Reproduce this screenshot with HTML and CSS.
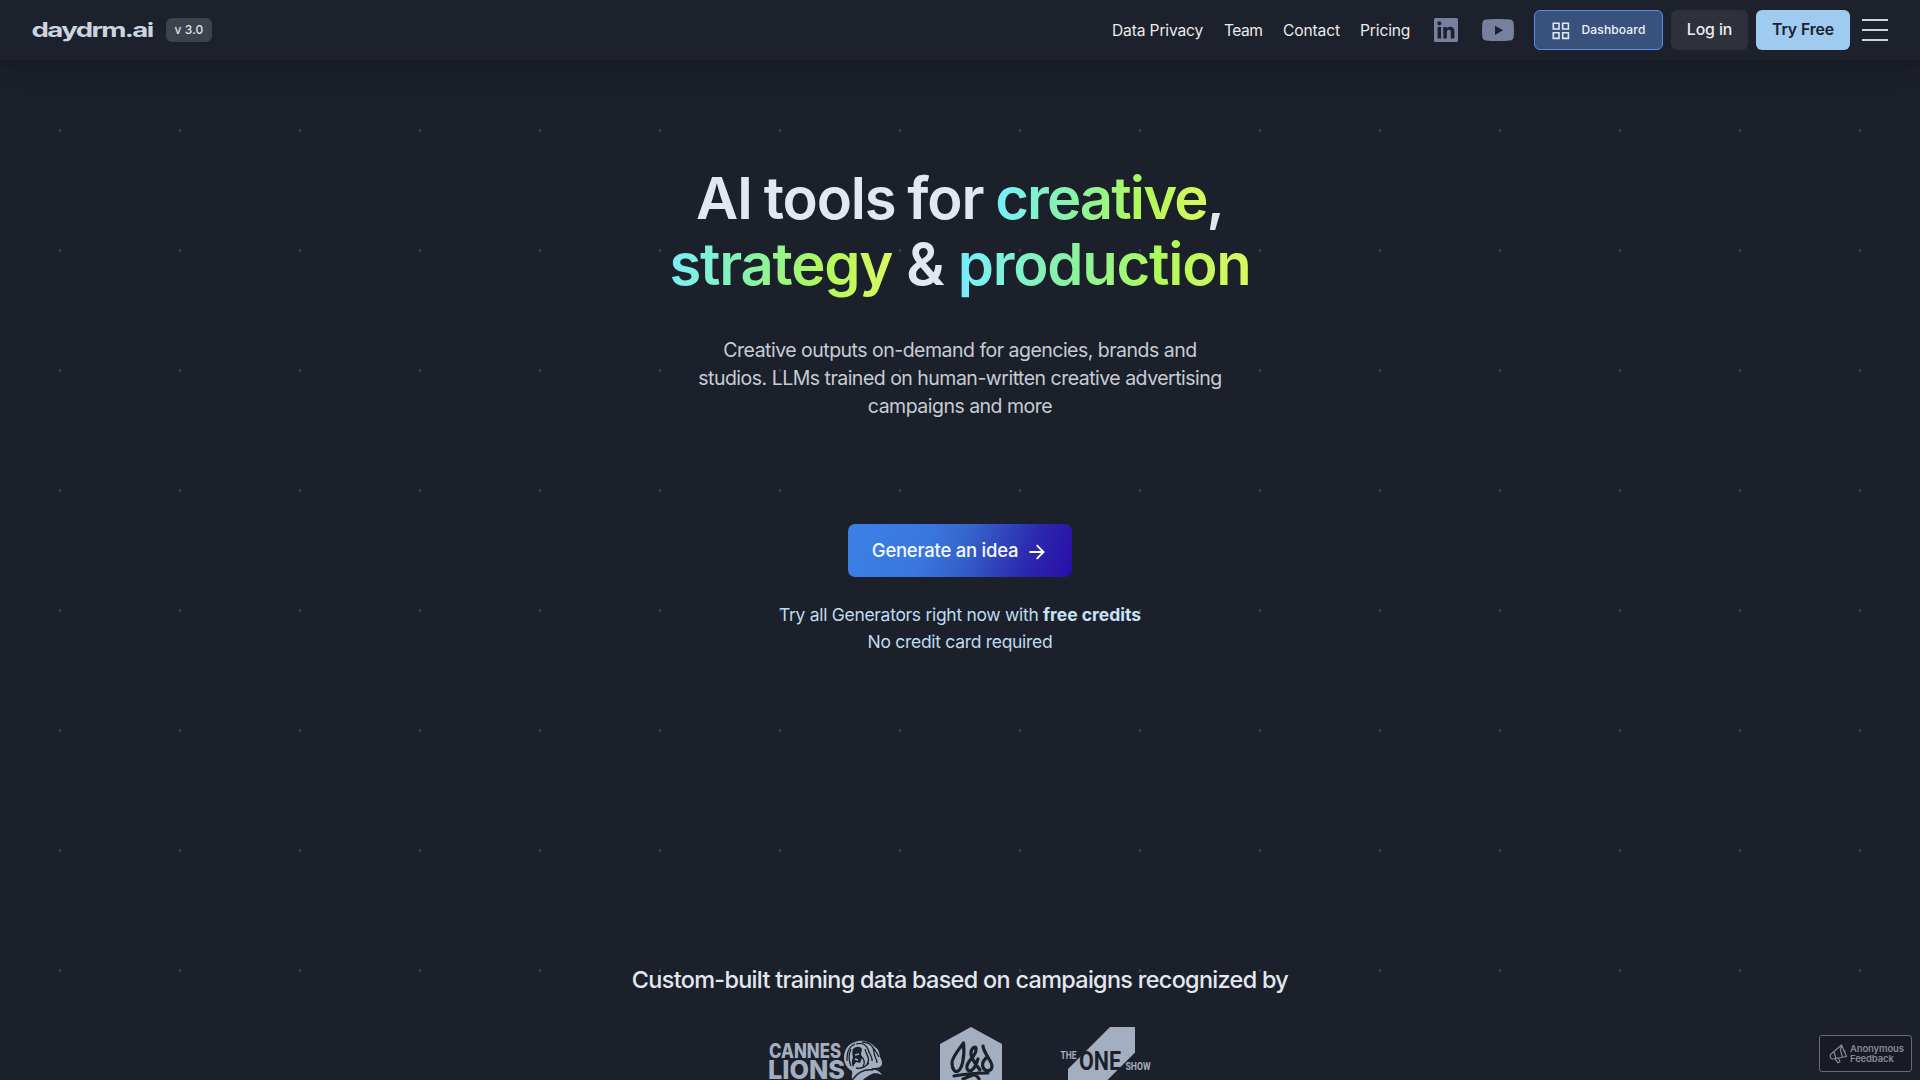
FILE: index.html
```
<!DOCTYPE html>
<html lang="en">
<head>
<meta charset="utf-8">
<title>daydrm.ai</title>
<link rel="stylesheet" href="styles.css">
</head>
<body>
<header class="header">
  <div class="brand">
    <svg class="logo" width="122" height="30" viewBox="0 0 122 30"><text x="-0.5" y="21.500" textLength="121" lengthAdjust="spacingAndGlyphs">daydrm.ai</text></svg>
    <span class="version">v 3.0</span>
  </div>
  <nav class="nav">
    <a class="link link-privacy">Data Privacy</a>
    <a class="link link-team">Team</a>
    <a class="link link-contact">Contact</a>
    <a class="link link-pricing">Pricing</a>
  </nav>
  <div class="social">
    <svg width="24" height="24" viewBox="0 0 24 24"><path fill="#77809c" fill-rule="evenodd" d="M1.5 0h21A1.5 1.5 0 0 1 24 1.5v21a1.5 1.5 0 0 1-1.5 1.5h-21A1.5 1.5 0 0 1 0 22.500v-21A1.500 1.500 0 0 1 1.500 0zM3.600 9v11.400h3.500V9zM5.350 3.300a2.050 2.050 0 1 0 0 4.100 2.050 2.050 0 0 0 0-4.100zM9.300 9v11.400h3.500v-5.650c0-1.500.3-2.950 2.150-2.950 1.800 0 1.850 1.700 1.850 3.050v5.550h3.600v-6.250c0-3.070-.67-5.430-4.270-5.430-1.730 0-2.880.95-3.350 1.840h-.05V9z"/></svg>
    <svg width="32" height="24" viewBox="0 0 32 24"><path fill="#77809c" fill-rule="evenodd" d="M4 1.500C10 .8 22 .8 28 1.500c2 .2 3.300 1.300 3.600 3.300.5 4.700.5 9.700 0 14.400-.3 2-1.600 3.100-3.600 3.300-6 .7-18 .7-24 0-2-.2-3.300-1.300-3.600-3.300-.5-4.700-.5-9.700 0-14.400C.7 2.800 2 1.700 4 1.500zM13 7.700v9.200l8-4.600z"/></svg>
  </div>
  <div class="actions">
    <a class="btn btn-dashboard">
      <svg width="18" height="18" viewBox="0 0 18 18" fill="none" stroke="#dfe7f2" stroke-width="1.600"><path d="M1.300 1.300h5.700v5.700H1.300zM10.700 1.300h5.700v5.700h-5.700zM1.300 10.700h5.700v5.700H1.300zM10.700 10.700h5.700v5.700h-5.700z"/></svg>
      <span>Dashboard</span>
    </a>
    <a class="btn btn-login">Log in</a>
    <a class="btn btn-try">Try Free</a>
  </div>
  <div class="burger"><span></span><span></span><span></span></div>
</header>

<main class="hero">
  <h1 class="title"><span class="line-one">AI tools for <span class="glow">creative</span>,</span><br><span class="line-two"><span class="glow">strategy</span> &amp; <span class="glow">production</span></span></h1>
  <p class="lead">Creative outputs on-demand for agencies, brands and<br>studios. LLMs trained on human-written creative advertising<br>campaigns and more</p>
  <a class="cta">
    <span>Generate an idea</span>
    <svg width="16" height="16" viewBox="0 0 16 16" fill="none" stroke="#fff" stroke-width="1.900"><path d="M.5 8h13.500M7.700 1.200 14.500 8l-6.800 6.800"/></svg>
  </a>
  <p class="note">Try all Generators right now with <b>free credits</b><br>No credit card required</p>
</main>

<section class="awards">
  <h2 class="awards-title">Custom-built training data based on campaigns recognized by</h2>
  <div class="logos">
    <svg class="cannes" width="114" height="53" viewBox="0 0 114 53">
      <text class="heavy" x="0" y="31" font-size="19.500" textLength="72" lengthAdjust="spacingAndGlyphs">CANNES</text>
      <text class="heavy" x="-1" y="52" font-size="26" textLength="77" lengthAdjust="spacingAndGlyphs">LIONS</text>
      <path fill="#a3afc0" d="M75 31c0-8 4-14 11-16 8-3 16 0 20 5 5 3 4 7 5 10 2 3 3 7 1 9-3 3-8 1-10 3-5 1-10 2-14 6l-5 4c-1-3 1-5 0-8-4-2-8-7-8-13z"/>
      <path fill="#1c202a" d="M84 22c3-3 7-3 9 0l-1 5 1 4-2 5-4-1-3 5c-2-4-1-7 0-10-1-3-1-6 0-8z"/>
      <path fill="none" stroke="#1c202a" stroke-width="1.300" d="M78 34c0-8 1-14 8-17M82 39c-3-6-2-13 0-17M87 17c6-2 10 1 12 5 1 5 5 8 4 12M93 15c8 0 12 5 12 10 0 4 3 7 3 11M96 22c1 6 6 9 2 15M92 29c3 3 5 6 2 10M103 20c4 3 5 7 7 10M87 41c4 1 9-1 13-5"/>
      <path fill="none" stroke="#a3afc0" stroke-width="1.500" d="M86 28l4-1M86 32l3 1M85 38l4-1"/>
      <path fill="#a3afc0" d="M84 53c5-9 14-12 23-10 3 1 5 3 6 5-5-3-10-2-13 1-3 2-5 2-6 4H84z"/>
      <path fill="none" stroke="#1c202a" stroke-width="1.500" d="M84 52c5-7 12-10 20-9M95 55c2-4 6-7 11-8"/>
    </svg>
    <svg class="dandad" width="62" height="53" viewBox="0 0 62 53">
      <path fill="#a3afc0" d="M31 0 62 17v36H0V17z"/>
      <g fill="none" stroke="#1c202a" stroke-width="3.200" stroke-linecap="round" stroke-linejoin="round">
        <path d="M23.500 16c-5 7-12 15-11.500 20 0 6 3 10 6 8 4-2 7-14 5.500-28"/>
        <path d="M40 43c-5-7-10-13-9-18 1-5 6-7 5-2 0 6-8 10-9 16-1 6 4 6 7 2 2-3 3-6 4-9"/>
        <path d="M43 19c1 8 9 15 9 20 0 5-5 6-8 3-3-4-1-8 2-11"/>
        <path d="M14 49c10-2 22-3 34-3M38 46l-15 6M32 47c4 1 6 3 7 5"/>
      </g>
    </svg>
    <svg class="oneshow" width="92" height="53" viewBox="0 0 92 53">
      <path fill="#a3afc0" d="M50 0h25v25.500L47.500 53H8V42z"/>
      <text class="narrow" x="0.500" y="32" font-size="10" textLength="16" lengthAdjust="spacingAndGlyphs">THE</text>
      <text class="narrow dark" x="19" y="43" font-size="25" textLength="42" lengthAdjust="spacingAndGlyphs">ONE</text>
      <text class="narrow" x="65.500" y="43" font-size="11" textLength="25" lengthAdjust="spacingAndGlyphs">SHOW</text>
    </svg>
  </div>
</section>

<a class="feedback">
  <svg width="19" height="20" viewBox="0 0 19 20" fill="none" stroke="#858995" stroke-width="1.200" stroke-linejoin="round"><path d="M1.500 10.500 12.500 1l5 11.500-14 2.500c-2 0-3-3-2-4.500zM12.500 1l-1 5.500 2 6.500M5 8l2 6.500M6 14.800l3 4 2-1-1.500-3.500M14 6c1.500 0 2.500 2 1.500 3"/></svg>
  <span>Anonymous<br>Feedback</span>
</a>
</body>
</html>
```
FILE: styles.css
```
* { box-sizing: border-box; margin: 0; }

body {
  height: 1080px;
  overflow: hidden;
  position: relative;
  display: flex;
  flex-direction: column;
  font-family: Inter, "Liberation Sans", sans-serif;
  color: #e2e8f0;
  background:
    radial-gradient(circle at 60px 10.500px, #34466f 0 .8px, transparent 1.600px) 0 0 / 120px 120px,
    #1c202a;
}

.header {
  flex: none;
  height: 60px;
  padding: 0 32px;
  display: flex;
  align-items: center;
  background: #1d212b;
  box-shadow: 0 4px 6px rgba(18, 14, 28, .22), 0 10px 30px rgba(0, 0, 0, .1);
}

.brand { display: flex; align-items: center; gap: 12px; margin-right: auto; }
.logo { display: block; overflow: visible; }
.logo text { font: 700 20px Inter, sans-serif; letter-spacing: -1.200px; fill: #cbd5e0; }
.version {
  width: 46px; height: 24px; border-radius: 6px;
  display: grid; place-items: center;
  padding-bottom: 1px;
  font-size: 12px; font-weight: 500; letter-spacing: .1px;
  color: #dfe3ea; background: #3e424c;
}

.nav { display: flex; gap: 20px; padding-top: 1px; }
.link { font-size: 15.600px; letter-spacing: -.15px; white-space: nowrap; color: #ebebec; line-height: 24px; }
.link-privacy { width: 92px; }
.link-team { width: 39px; letter-spacing: -.5px; }
.link-contact { width: 57px; }
.link-pricing { width: 50px; }

.social { display: flex; gap: 24px; margin: 0 20px 0 24px; }
.social svg { display: block; }

.actions { display: flex; gap: 8px; }
.btn {
  height: 40px; border-radius: 6px;
  display: flex; align-items: center; justify-content: center;
  font-size: 15.800px; font-weight: 500; white-space: nowrap;
  padding-bottom: 2px;
}
.btn-dashboard {
  width: 129px; gap: 12px; border: 1px solid #558df0;
  padding: 0; color: #edf2f7; background: #38527d;
  font-size: 12px; letter-spacing: .15px;
}
.btn-dashboard svg { margin-top: 2px; }
.btn-dashboard span { margin-top: -1px; }
.btn-login { width: 77px; color: #ededee; background: #2e313b; letter-spacing: -.1px; }
.btn-try { width: 94px; color: #1a202c; background: #9fcbf1; font-weight: 600; letter-spacing: -.1px; }

.burger { width: 26px; margin-left: 12px; display: flex; flex-direction: column; gap: 8px; }
.burger span { height: 2px; background: #cbd5e0; }

.hero {
  height: 905px;
  flex: none;
  padding-top: 105px;
  display: flex;
  flex-direction: column;
  align-items: center;
  text-align: center;
}
.title { font-size: 58px; line-height: 66px; font-weight: 600; white-space: nowrap; }
.line-one { letter-spacing: -1.200px; word-spacing: -1.500px; }
.line-one .glow { letter-spacing: -1.900px; }
.line-two { letter-spacing: -1px; word-spacing: .500px; }
.line-two .glow { letter-spacing: -1.250px; }
.glow {
  color: transparent;
  background: linear-gradient(100deg, #74e4ff 0%, #7bf0f0 8%, #88f2a5 38%, #aff95a 68%, #dcf860 100%);
  -webkit-background-clip: text;
  background-clip: text;
}
.lead { margin-top: 39px; font-size: 19.500px; line-height: 28px; letter-spacing: -.51px; color: #c6ccd6; white-space: nowrap; }
.cta {
  margin-top: 104px; width: 224px; height: 53px; border-radius: 7px;
  padding: 0 3px 1px 0;
  display: flex; align-items: center; justify-content: center; gap: 11px;
  font-size: 18.500px; font-weight: 500; letter-spacing: -.25px; white-space: nowrap; color: #f4f8ff;
  background: linear-gradient(112deg, #3b80e6 0%, #3977de 35%, #3562cb 52%, #2b27ad 80%, #2a0daa 100%);
}
.cta svg { margin-top: 3px; }
.note { margin-top: 24px; font-size: 17.500px; line-height: 27px; letter-spacing: -.3px; color: #bcdcf0; white-space: nowrap; }
.note b { letter-spacing: 0; font-weight: 700; color: #c5e4f7; }

.awards { flex: none; display: flex; flex-direction: column; align-items: center; }
.awards-title { font-size: 23.400px; line-height: 30px; font-weight: 500; letter-spacing: -.67px; white-space: nowrap; }
.logos { margin: 32px 0 0 1px; width: 383px; display: flex; justify-content: space-between; }
.logos svg { display: block; overflow: visible; }
.dandad { margin-left: -2px; }
.heavy { font-family: Inter, sans-serif; font-weight: 800; fill: #a3afc0; }
.narrow { font-family: Roboto, Inter, sans-serif; font-weight: 700; fill: #a3afc0; }
.dark { fill: #1c202a; }

.feedback {
  position: absolute; right: 8px; bottom: 8px;
  width: 93px; height: 37px;
  display: flex; align-items: center; gap: 2px; padding-left: 9px;
  border: 1px solid #666a77; border-radius: 3px;
  background: #181a24; color: #858995;
  font-size: 9.500px; line-height: 9.500px; font-weight: 600; letter-spacing: -.15px;
}
```
